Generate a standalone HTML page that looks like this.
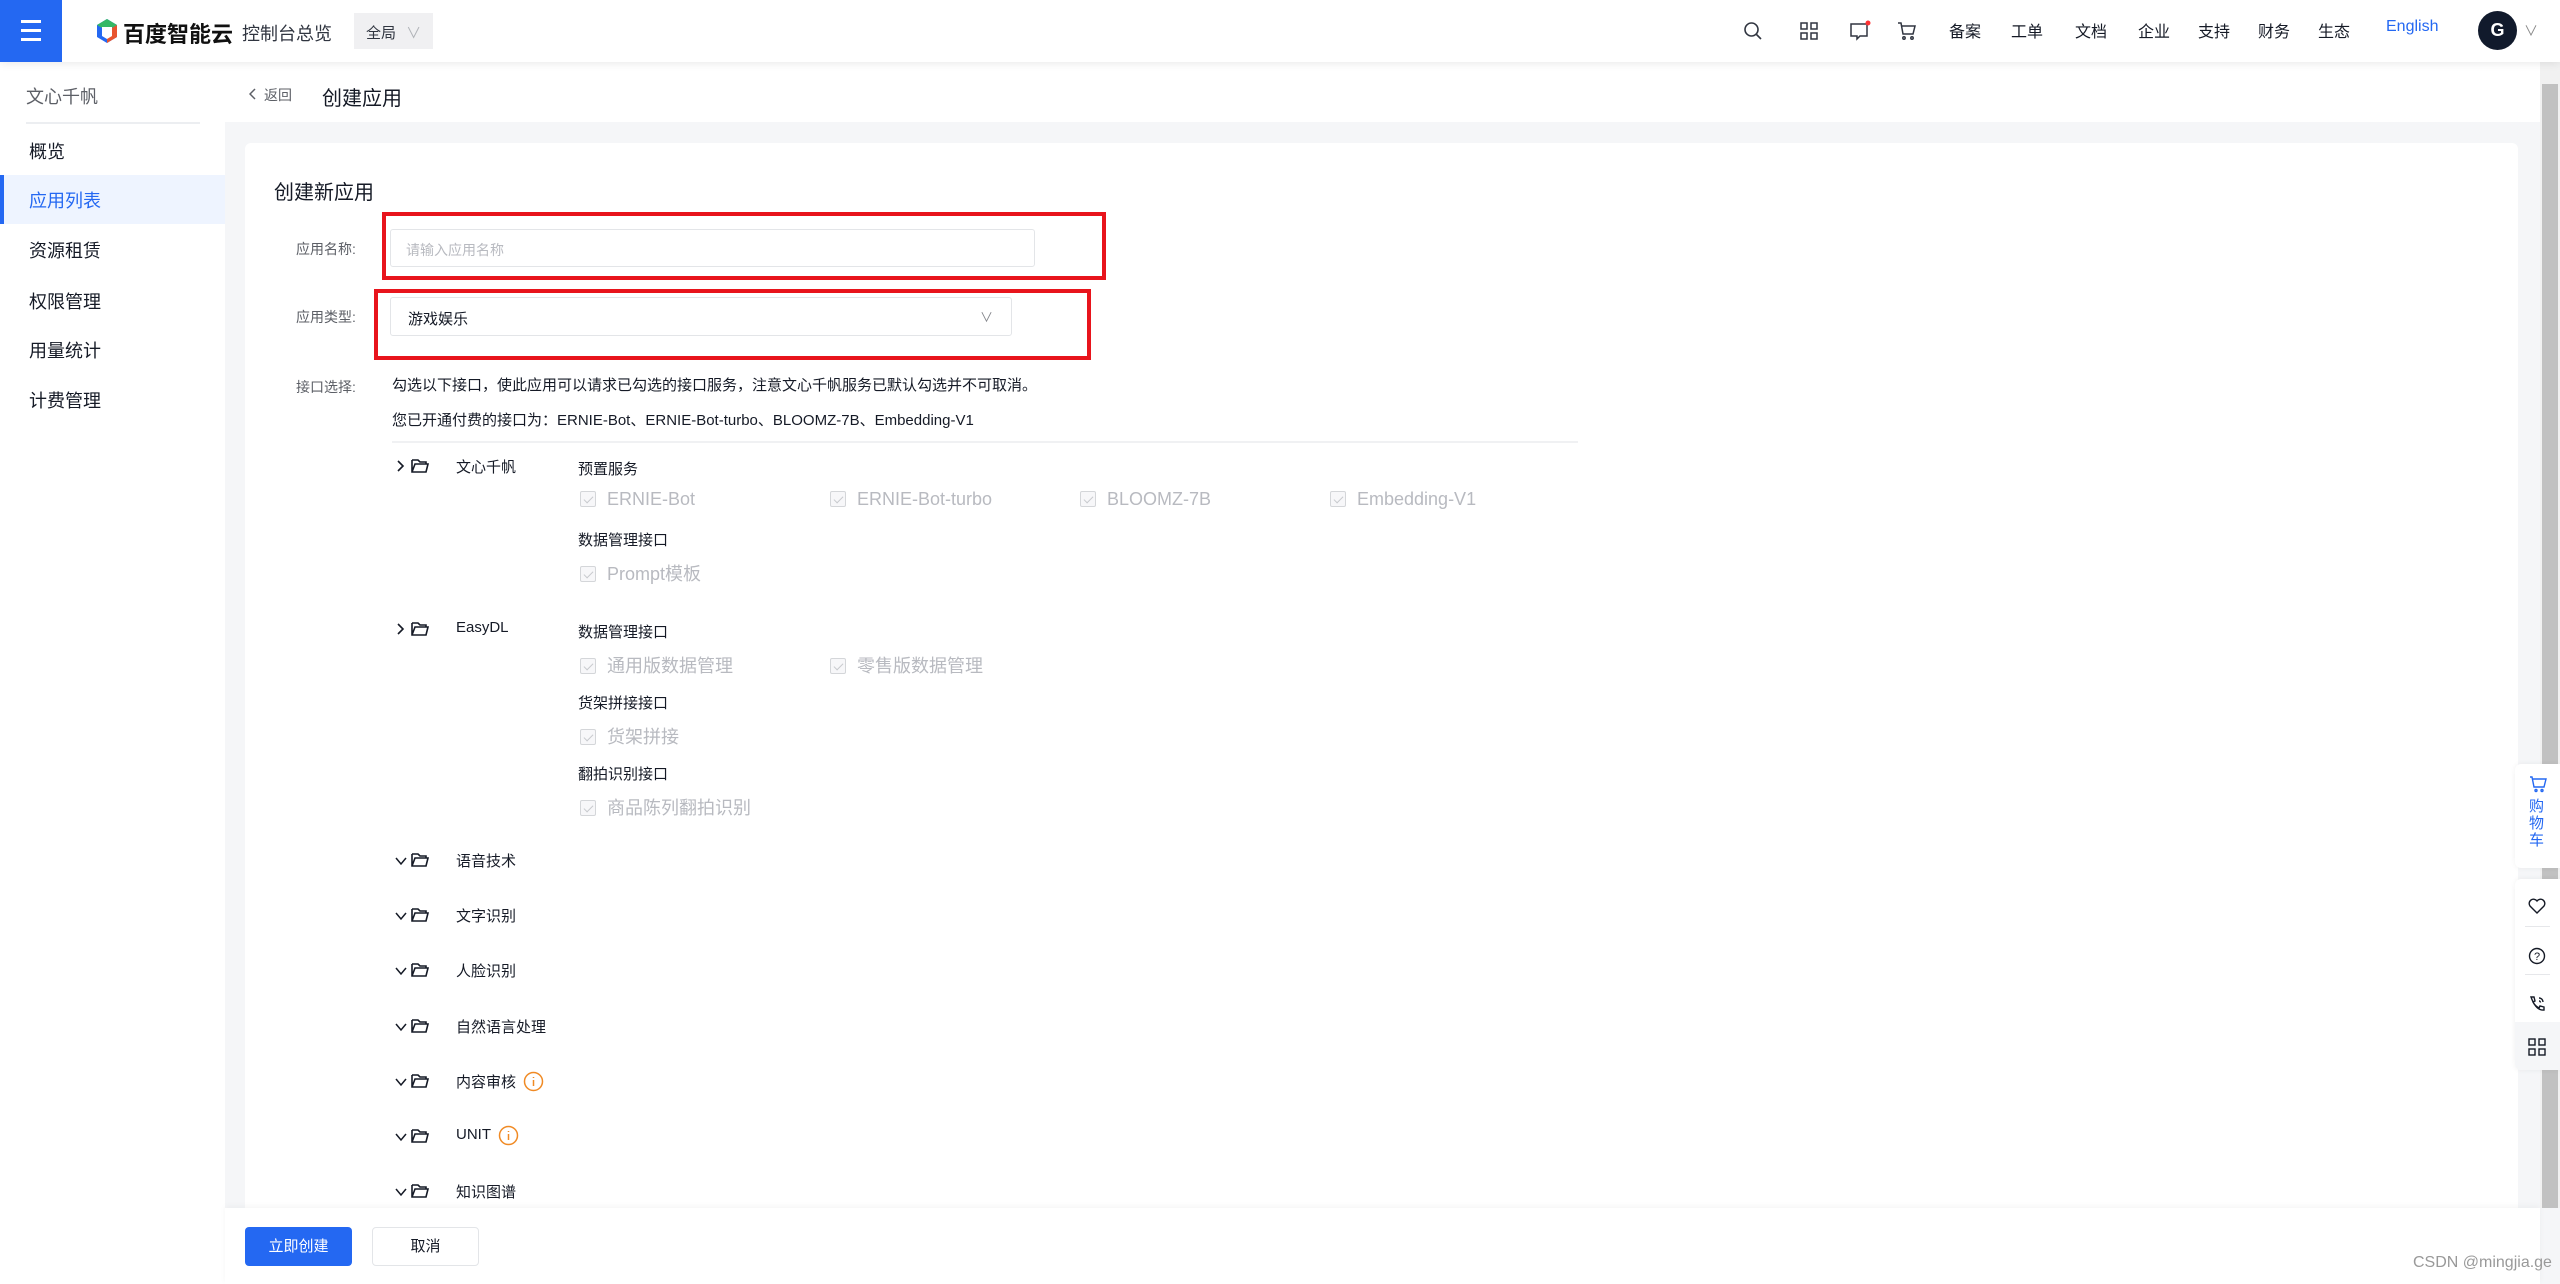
<!DOCTYPE html>
<html><head><meta charset="utf-8"><style>
*{box-sizing:border-box;margin:0;padding:0}
body{width:2560px;height:1284px;overflow:hidden;background:#f5f6f8;font-family:"Liberation Sans","Noto Sans CJK SC",sans-serif;color:#151a26;position:relative}
.a{position:absolute;white-space:nowrap}
.top{position:absolute;left:0;top:0;width:2560px;height:62px;background:#fff;box-shadow:0 2px 8px rgba(0,0,0,.08);z-index:5}
.side{position:absolute;left:0;top:62px;width:225px;height:1222px;background:#fff}
.nav{font-size:16px;color:#151a26;top:18px}
.si{left:29px;font-size:18px;color:#151a26}
.lbl{font-size:14px;color:#5c5f66}
.sub{font-size:15px;color:#151a26}
.cb{font-size:18px;color:#b8bac0}
.cb i{display:inline-block;width:16px;height:16px;border:1px solid #d4d6d9;border-radius:2px;background:#f7f7f9;margin-right:11px;vertical-align:-2px;position:relative}
.cb i:after{content:"";position:absolute;left:5px;top:2px;width:4px;height:8px;border:solid #c8cace;border-width:0 1.5px 1.5px 0;transform:rotate(45deg)}
.cat{font-size:15px;color:#151a26}
</style></head><body>
<div class="top">
  <div class="a" style="left:0;top:0;width:62px;height:62px;background:#2468f2">
    <div class="a" style="left:21px;top:20px;width:20px;height:3px;background:#fff"></div>
    <div class="a" style="left:21px;top:29px;width:20px;height:3px;background:#fff"></div>
    <div class="a" style="left:21px;top:38px;width:20px;height:3px;background:#fff"></div>
  </div>
  <svg class="a" style="left:95px;top:18px" width="24" height="27" viewBox="0 0 24 27"><path d="M12 1 L22 7 L22 19 L12 25 L2 19 L2 7Z" fill="#2468f2"/><path d="M12 1 L22 7 L12 13 L2 7Z" fill="#35b865"/><path d="M12 13 L22 7 L22 19 L12 25Z" fill="#e8542f"/><path d="M7 9 L17 9 L17 18 L12 21 L7 18Z" fill="#fff"/></svg>
  <div class="a" style="left:123px;top:17px;font-size:22px;font-weight:bold;color:#111">百度智能云</div>
  <div class="a" style="left:242px;top:20px;font-size:18px;color:#303540">控制台总览</div>
  <div class="a" style="left:354px;top:13px;width:79px;height:36px;background:#f0f0f2;font-size:15px;color:#303540;padding:9px 0 0 12px">全局 <span style="color:#b0b3b8;margin-left:6px">∨</span></div>
  <svg class="a" style="left:1743px;top:21px" width="20" height="20" viewBox="0 0 20 20" fill="none" stroke="#303540" stroke-width="1.6"><circle cx="8.5" cy="8.5" r="6.5"/><path d="M13.5 13.5 L18 18"/></svg>
  <svg class="a" style="left:1800px;top:22px" width="18" height="18" viewBox="0 0 18 18" fill="none" stroke="#303540" stroke-width="1.5"><rect x="1" y="1" width="6" height="6"/><rect x="11" y="1" width="6" height="6"/><rect x="1" y="11" width="6" height="6"/><rect x="11" y="11" width="6" height="6"/></svg>
  <svg class="a" style="left:1849px;top:20px" width="22" height="22" viewBox="0 0 22 22" fill="none" stroke="#303540" stroke-width="1.5"><path d="M2 4 H18 V16 H11 L8 19 L8 16 H2Z"/><circle cx="19" cy="3" r="2.5" fill="#f33" stroke="none"/></svg>
  <svg class="a" style="left:1897px;top:21px" width="20" height="20" viewBox="0 0 20 20" fill="none" stroke="#303540" stroke-width="1.5"><path d="M1 2 H4 L6 13 H16 L18 5 H5"/><circle cx="7" cy="17" r="1.2"/><circle cx="15" cy="17" r="1.2"/></svg>
  <div class="a nav" style="left:1949px">备案</div>
  <div class="a nav" style="left:2011px">工单</div>
  <div class="a nav" style="left:2075px">文档</div>
  <div class="a nav" style="left:2138px">企业</div>
  <div class="a nav" style="left:2198px">支持</div>
  <div class="a nav" style="left:2258px">财务</div>
  <div class="a nav" style="left:2318px">生态</div>
  <div class="a nav" style="left:2386px;color:#2468f2">English</div>
  <div class="a" style="left:2478px;top:11px;width:39px;height:39px;border-radius:50%;background:#111a2c;color:#fff;font-size:18px;font-weight:bold;text-align:center;line-height:39px">G</div>
  <div class="a" style="left:2524px;top:21px;font-size:14px;color:#888">∨</div>
</div>
<div class="side">
  <div class="a" style="left:26px;top:21px;font-size:18px;color:#5c5f66">文心千帆</div>
  <div class="a" style="left:26px;top:60px;width:174px;height:2px;background:#eceef1"></div>
  <div class="a si" style="top:76px">概览</div>
  <div class="a" style="left:0;top:113px;width:225px;height:49px;background:#eef4ff;border-left:4px solid #2468f2"></div>
  <div class="a si" style="top:125px;color:#2468f2">应用列表</div>
  <div class="a si" style="top:175px">资源租赁</div>
  <div class="a si" style="top:226px">权限管理</div>
  <div class="a si" style="top:275px">用量统计</div>
  <div class="a si" style="top:325px">计费管理</div>
</div>
<div class="a" style="left:225px;top:62px;width:2315px;height:60px;background:#fff"></div>
<svg class="a" style="left:249px;top:88px" width="8" height="12" viewBox="0 0 8 12" fill="none" stroke="#5c5f66" stroke-width="1.5"><path d="M6 1 L1 6 L6 11"/></svg>
<div class="a" style="left:264px;top:85px;font-size:14px;color:#5c5f66">返回</div>
<div class="a" style="left:322px;top:82px;font-size:20px;color:#151a26">创建应用</div>
<div class="a" style="left:245px;top:143px;width:2273px;height:1141px;background:#fff;border-radius:6px"></div>
<div class="a" style="left:274px;top:176px;font-size:20px">创建新应用</div>
<div class="a lbl" style="left:296px;top:239px">应用名称:</div>
<div class="a" style="left:390px;top:229px;width:645px;height:38px;border:1px solid #e3e5e8;border-radius:3px;font-size:14px;color:#b8bac0;padding:10px 0 0 15px">请输入应用名称</div>
<div class="a" style="left:382px;top:212px;width:724px;height:68px;border:4px solid #e8141c"></div>
<div class="a lbl" style="left:296px;top:307px">应用类型:</div>
<div class="a" style="left:390px;top:297px;width:622px;height:39px;border:1px solid #e3e5e8;border-radius:3px;font-size:15px;color:#151a26;padding:10px 0 0 17px">游戏娱乐<span style="position:absolute;right:18px;top:9px;color:#84868c;font-size:13px">∨</span></div>
<div class="a" style="left:374px;top:289px;width:717px;height:71px;border:4px solid #e8141c"></div>
<div class="a lbl" style="left:296px;top:377px">接口选择:</div>
<div class="a" style="left:392px;top:374px;font-size:15px;color:#151a26">勾选以下接口，使此应用可以请求已勾选的接口服务，注意文心千帆服务已默认勾选并不可取消。</div>
<div class="a" style="left:392px;top:409px;font-size:15px;color:#151a26">您已开通付费的接口为：ERNIE-Bot、ERNIE-Bot-turbo、BLOOMZ-7B、Embedding-V1</div>
<div class="a" style="left:392px;top:441px;width:1186px;height:2px;background:#f0f1f3"></div>

<svg width="0" height="0" style="position:absolute"><defs>
<symbol id="fo" viewBox="0 0 20 16"><path d="M2 2 H8 L10 4 H16 V6 M2 2 V14 H16 L18 6 H5 L2 14" fill="none" stroke="#151a26" stroke-width="1.6"/></symbol>
<symbol id="ar" viewBox="0 0 10 14"><path d="M3 2 L8 7 L3 12" fill="none" stroke="#151a26" stroke-width="1.6"/></symbol>
<symbol id="dn" viewBox="0 0 12 10"><path d="M1 2 L6 8 L11 2" fill="none" stroke="#151a26" stroke-width="1.5"/></symbol>
</defs></svg>

<svg class="a" style="left:395px;top:459px" width="10" height="14"><use href="#ar"/></svg>
<svg class="a" style="left:410px;top:458px" width="20" height="16"><use href="#fo"/></svg>
<div class="a cat" style="left:456px;top:456px">文心千帆</div>
<div class="a sub" style="left:578px;top:458px">预置服务</div>
<div class="a cb" style="left:580px;top:489px"><i></i>ERNIE-Bot</div>
<div class="a cb" style="left:830px;top:489px"><i></i>ERNIE-Bot-turbo</div>
<div class="a cb" style="left:1080px;top:489px"><i></i>BLOOMZ-7B</div>
<div class="a cb" style="left:1330px;top:489px"><i></i>Embedding-V1</div>
<div class="a sub" style="left:578px;top:529px">数据管理接口</div>
<div class="a cb" style="left:580px;top:560px"><i></i>Prompt模板</div>

<svg class="a" style="left:395px;top:622px" width="10" height="14"><use href="#ar"/></svg>
<svg class="a" style="left:410px;top:621px" width="20" height="16"><use href="#fo"/></svg>
<div class="a cat" style="left:456px;top:619px">EasyDL</div>
<div class="a sub" style="left:578px;top:621px">数据管理接口</div>
<div class="a cb" style="left:580px;top:652px"><i></i>通用版数据管理</div>
<div class="a cb" style="left:830px;top:652px"><i></i>零售版数据管理</div>
<div class="a sub" style="left:578px;top:692px">货架拼接接口</div>
<div class="a cb" style="left:580px;top:723px"><i></i>货架拼接</div>
<div class="a sub" style="left:578px;top:763px">翻拍识别接口</div>
<div class="a cb" style="left:580px;top:794px"><i></i>商品陈列翻拍识别</div>

<svg class="a" style="left:395px;top:856px" width="12" height="10"><use href="#dn"/></svg><svg class="a" style="left:410px;top:852px" width="20" height="16"><use href="#fo"/></svg><div class="a cat" style="left:456px;top:850px">语音技术</div>
<svg class="a" style="left:395px;top:911px" width="12" height="10"><use href="#dn"/></svg><svg class="a" style="left:410px;top:907px" width="20" height="16"><use href="#fo"/></svg><div class="a cat" style="left:456px;top:905px">文字识别</div>
<svg class="a" style="left:395px;top:966px" width="12" height="10"><use href="#dn"/></svg><svg class="a" style="left:410px;top:962px" width="20" height="16"><use href="#fo"/></svg><div class="a cat" style="left:456px;top:960px">人脸识别</div>
<svg class="a" style="left:395px;top:1022px" width="12" height="10"><use href="#dn"/></svg><svg class="a" style="left:410px;top:1018px" width="20" height="16"><use href="#fo"/></svg><div class="a cat" style="left:456px;top:1016px">自然语言处理</div>
<svg class="a" style="left:395px;top:1077px" width="12" height="10"><use href="#dn"/></svg><svg class="a" style="left:410px;top:1073px" width="20" height="16"><use href="#fo"/></svg><div class="a cat" style="left:456px;top:1071px">内容审核</div>
<svg class="a" style="left:523px;top:1071px" width="21" height="21" viewBox="0 0 21 21" fill="none" stroke="#f08a24" stroke-width="1.5"><circle cx="10.5" cy="10.5" r="9"/><path d="M10.5 9 V15 M10.5 6 V7"/></svg>
<svg class="a" style="left:395px;top:1132px" width="12" height="10"><use href="#dn"/></svg><svg class="a" style="left:410px;top:1128px" width="20" height="16"><use href="#fo"/></svg><div class="a cat" style="left:456px;top:1126px">UNIT</div>
<svg class="a" style="left:498px;top:1125px" width="21" height="21" viewBox="0 0 21 21" fill="none" stroke="#f08a24" stroke-width="1.5"><circle cx="10.5" cy="10.5" r="9"/><path d="M10.5 9 V15 M10.5 6 V7"/></svg>
<svg class="a" style="left:395px;top:1187px" width="12" height="10"><use href="#dn"/></svg><svg class="a" style="left:410px;top:1183px" width="20" height="16"><use href="#fo"/></svg><div class="a cat" style="left:456px;top:1181px">知识图谱</div>

<div class="a" style="left:225px;top:1208px;width:2315px;height:76px;background:#fff;box-shadow:0 -2px 6px rgba(0,0,0,.04)"></div>
<div class="a" style="left:245px;top:1227px;width:107px;height:39px;background:#2468f2;border-radius:4px;color:#fff;font-size:15px;text-align:center;line-height:39px">立即创建</div>
<div class="a" style="left:372px;top:1227px;width:107px;height:39px;border:1px solid #e3e5e8;border-radius:4px;color:#151a26;font-size:15px;text-align:center;line-height:37px">取消</div>
<div class="a" style="left:2413px;top:1254px;font-size:16px;color:#999">CSDN @mingjia.ge</div>

<div class="a" style="left:2540px;top:62px;width:20px;height:1146px;background:#f1f1f1"></div>
<div class="a" style="left:2542px;top:84px;width:16px;height:1124px;background:#c1c1c1"></div>
<div class="a" style="left:2515px;top:764px;width:45px;height:104px;background:#fff;border-radius:6px 0 0 6px;box-shadow:0 0 6px rgba(0,0,0,.06)"></div>
<svg class="a" style="left:2529px;top:776px" width="18" height="17" viewBox="0 0 18 17" fill="none" stroke="#2468f2" stroke-width="1.4"><path d="M1 1 H3 L5 11 H15 L17 3 H4"/><circle cx="7" cy="14.5" r="1"/><circle cx="13" cy="14.5" r="1"/></svg>
<div class="a" style="left:2529px;top:798px;font-size:15px;color:#2468f2;line-height:17px;white-space:normal;width:18px">购物车</div>
<div class="a" style="left:2515px;top:879px;width:45px;height:191px;background:#fff;border-radius:6px 0 0 6px;box-shadow:0 0 6px rgba(0,0,0,.06)"></div>
<div class="a" style="left:2515px;top:1022px;width:45px;height:48px;background:#f5f6f8;border-radius:0 0 0 6px"></div>
<svg class="a" style="left:2528px;top:898px" width="18" height="16" viewBox="0 0 18 16" fill="none" stroke="#151a26" stroke-width="1.4"><path d="M9 15 L2 8 A4 4 0 0 1 9 3 A4 4 0 0 1 16 8Z"/></svg>
<div class="a" style="left:2525px;top:926px;width:25px;height:1px;background:#e6e7ea"></div>
<svg class="a" style="left:2528px;top:947px" width="18" height="18" viewBox="0 0 18 18" fill="none" stroke="#151a26" stroke-width="1.4"><circle cx="9" cy="9" r="7.5"/><text x="9" y="13" font-size="11" text-anchor="middle" fill="#151a26" stroke="none" font-family="Liberation Sans">?</text></svg>
<div class="a" style="left:2525px;top:974px;width:25px;height:1px;background:#e6e7ea"></div>
<svg class="a" style="left:2528px;top:995px" width="18" height="18" viewBox="0 0 18 18" fill="none" stroke="#151a26" stroke-width="1.4"><path d="M3 2 L6 2 L7 6 L5 7 Q7 11 11 13 L12 11 L16 12 L16 15 Q8 16 3 2Z"/><path d="M11 3 A4 4 0 0 1 15 7 M11 6 A1.5 1.5 0 0 1 12.5 7.5"/></svg>
<svg class="a" style="left:2528px;top:1038px" width="18" height="18" viewBox="0 0 18 18" fill="none" stroke="#151a26" stroke-width="1.4"><rect x="1" y="1" width="6" height="6"/><rect x="11" y="1" width="6" height="6"/><rect x="1" y="11" width="6" height="6"/><rect x="11" y="11" width="6" height="6"/></svg>
</body></html>
